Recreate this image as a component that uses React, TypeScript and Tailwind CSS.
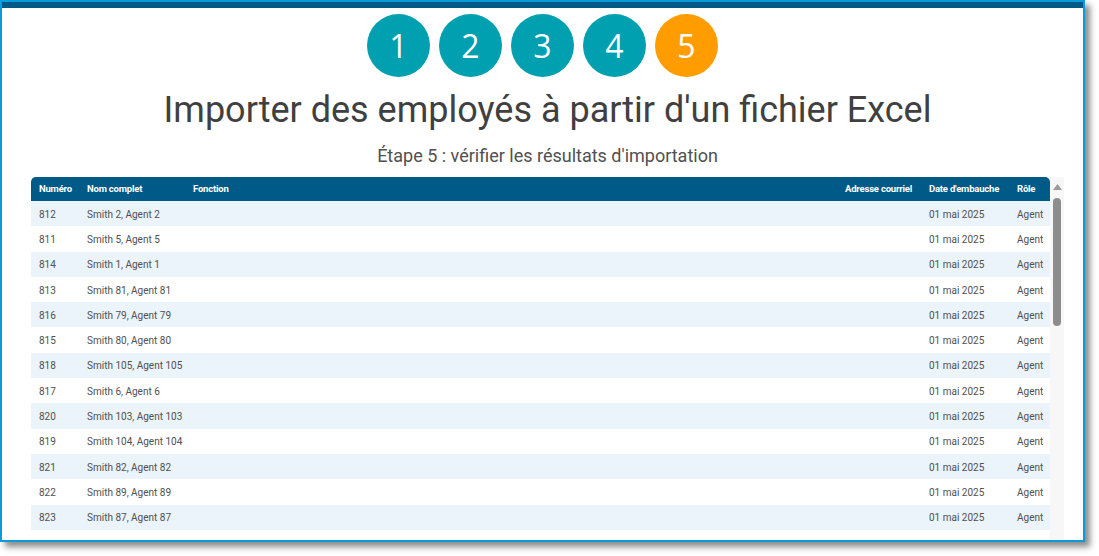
const rows: [string, string][] = [
  ["812", "Smith 2, Agent 2"],
  ["811", "Smith 5, Agent 5"],
  ["814", "Smith 1, Agent 1"],
  ["813", "Smith 81, Agent 81"],
  ["816", "Smith 79, Agent 79"],
  ["815", "Smith 80, Agent 80"],
  ["818", "Smith 105, Agent 105"],
  ["817", "Smith 6, Agent 6"],
  ["820", "Smith 103, Agent 103"],
  ["819", "Smith 104, Agent 104"],
  ["821", "Smith 82, Agent 82"],
  ["822", "Smith 89, Agent 89"],
  ["823", "Smith 87, Agent 87"],
];

const steps = ["1", "2", "3", "4", "5"];

const cols = "grid grid-cols-[48px_106px_1fr_84px_88px_33px] pl-2 items-center";

export default function App() {
  return (
    <div className="h-[556px] w-[1099px] bg-white font-['Roboto',sans-serif]">
      <div className="flex h-[542px] w-[1085px] flex-col overflow-hidden border-2 border-[#0b9bd8] bg-white shadow-[5px_5px_6px_rgba(0,0,0,0.45)]">
        <div className="h-[6px] shrink-0 bg-[#005a87]" />

        <div className="flex min-h-0 flex-1 flex-col items-center pt-[6px]">
          <div className="flex gap-[9px]">
            {steps.map((s) => (
              <div
                key={s}
                className={`flex h-[63px] w-[63px] items-center justify-center rounded-full font-['Open_Sans',sans-serif] text-[32px] leading-none text-white ${
                  s === "5" ? "bg-[#ff9d00]" : "bg-[#00a0b0]"
                }`}
              >
                {s}
              </div>
            ))}
          </div>

          <div className="flex flex-col items-center pl-[10px]">
            <h1 className="mt-[12px] text-[36px] leading-[42px] text-[#404040]">
              Importer des employés à partir d'un fichier Excel
            </h1>
            <p className="mt-[14px] text-[18px] leading-[22px] text-[#505050]">
              Étape 5 : vérifier les résultats d'importation
            </p>
          </div>

          <div className="mt-[10px] flex min-h-0 w-full flex-1 pl-[29px] pr-[19px]">
            <div className="min-w-0 flex-1">
              <div className={`${cols} h-[24px] rounded-t-[5px] bg-[#005a87] text-[9.5px] font-bold tracking-[-0.2px] text-white`}>
                <span>Numéro</span>
                <span>Nom complet</span>
                <span>Fonction</span>
                <span>Adresse courriel</span>
                <span>Date d'embauche</span>
                <span>Rôle</span>
              </div>
              {rows.map(([num, name], i) => (
                <div
                  key={num}
                  className={`${cols} h-[25.3px] pt-[1px] text-[10px] text-[#505050] ${
                    i % 2 === 0 ? "bg-[#ebf3fb]" : "bg-white"
                  }`}
                >
                  <span>{num}</span>
                  <span>{name}</span>
                  <span />
                  <span />
                  <span>01 mai 2025</span>
                  <span>Agent</span>
                </div>
              ))}
              <div className="h-[25.3px] bg-white" />
            </div>

            <div className="flex w-[14px] shrink-0 flex-col items-center bg-[#f7f7f7] pt-[7px]">
              <svg width="9" height="6" viewBox="0 0 9 6">
                <path d="M4.5 0 L9 6 L0 6 Z" fill="#9a9a9a" />
              </svg>
              <div className="mt-[8px] h-[128px] w-[8px] rounded-full bg-[#8d8d8d]" />
            </div>
          </div>
        </div>
      </div>
    </div>
  );
}
